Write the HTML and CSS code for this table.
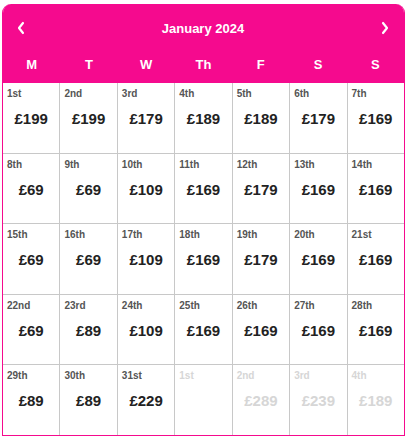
FILE: index.html
```html
<!DOCTYPE html>
<html>
<head>
<meta charset="utf-8">
<link rel="stylesheet" href="styles.css">
</head>
<body>
<div class="cal">
  <div class="head">
    <div class="title-row">
      <span class="nav"><svg width="10" height="14" viewBox="0 0 10 14"><path d="M7 2 L3 7 L7 12" fill="none" stroke="#fff" stroke-width="2.2" stroke-linecap="round" stroke-linejoin="round"/></svg></span>
      <span class="title">January 2024</span>
      <span class="nav"><svg width="10" height="14" viewBox="0 0 10 14"><path d="M3 2 L7 7 L3 12" fill="none" stroke="#fff" stroke-width="2.2" stroke-linecap="round" stroke-linejoin="round"/></svg></span>
    </div>
    <div class="days">
      <span>M</span><span>T</span><span>W</span><span>Th</span><span>F</span><span>S</span><span>S</span>
    </div>
  </div>
  <div class="grid">
    <div class="cell"><span class="d">1st</span><span class="p">£199</span></div>
    <div class="cell"><span class="d">2nd</span><span class="p">£199</span></div>
    <div class="cell"><span class="d">3rd</span><span class="p">£179</span></div>
    <div class="cell"><span class="d">4th</span><span class="p">£189</span></div>
    <div class="cell"><span class="d">5th</span><span class="p">£189</span></div>
    <div class="cell"><span class="d">6th</span><span class="p">£179</span></div>
    <div class="cell"><span class="d">7th</span><span class="p">£169</span></div>

    <div class="cell"><span class="d">8th</span><span class="p">£69</span></div>
    <div class="cell"><span class="d">9th</span><span class="p">£69</span></div>
    <div class="cell"><span class="d">10th</span><span class="p">£109</span></div>
    <div class="cell"><span class="d">11th</span><span class="p">£169</span></div>
    <div class="cell"><span class="d">12th</span><span class="p">£179</span></div>
    <div class="cell"><span class="d">13th</span><span class="p">£169</span></div>
    <div class="cell"><span class="d">14th</span><span class="p">£169</span></div>

    <div class="cell"><span class="d">15th</span><span class="p">£69</span></div>
    <div class="cell"><span class="d">16th</span><span class="p">£69</span></div>
    <div class="cell"><span class="d">17th</span><span class="p">£109</span></div>
    <div class="cell"><span class="d">18th</span><span class="p">£169</span></div>
    <div class="cell"><span class="d">19th</span><span class="p">£179</span></div>
    <div class="cell"><span class="d">20th</span><span class="p">£169</span></div>
    <div class="cell"><span class="d">21st</span><span class="p">£169</span></div>

    <div class="cell"><span class="d">22nd</span><span class="p">£69</span></div>
    <div class="cell"><span class="d">23rd</span><span class="p">£89</span></div>
    <div class="cell"><span class="d">24th</span><span class="p">£109</span></div>
    <div class="cell"><span class="d">25th</span><span class="p">£169</span></div>
    <div class="cell"><span class="d">26th</span><span class="p">£169</span></div>
    <div class="cell"><span class="d">27th</span><span class="p">£169</span></div>
    <div class="cell"><span class="d">28th</span><span class="p">£169</span></div>

    <div class="cell"><span class="d">29th</span><span class="p">£89</span></div>
    <div class="cell"><span class="d">30th</span><span class="p">£89</span></div>
    <div class="cell"><span class="d">31st</span><span class="p">£229</span></div>
    <div class="cell off"><span class="d">1st</span></div>
    <div class="cell off"><span class="d">2nd</span><span class="p">£289</span></div>
    <div class="cell off"><span class="d">3rd</span><span class="p">£239</span></div>
    <div class="cell off"><span class="d">4th</span><span class="p">£189</span></div>
  </div>
</div>
</body>
</html>
```

FILE: styles.css
```css
* { box-sizing: border-box; }
body {
  margin: 0;
  padding: 4px 0 0 2px;
  font-family: "Liberation Sans", Arial, sans-serif;
  background: #fff;
}
.cal {
  width: 403px;
  border: 1px solid #f50a8e;
  border-top: none;
  border-radius: 9px 9px 0 0;
  overflow: hidden;
}
.head {
  background: #f50a8e;
  color: #fff;
  height: 79px;
}
.title-row {
  height: 45px;
  display: flex;
  align-items: center;
  justify-content: space-between;
  padding: 3px 14px 0 13px;
}
.nav { display: flex; width: 10px; }
.title {
  font-size: 13px;
  font-weight: bold;
}
.days {
  display: grid;
  grid-template-columns: repeat(7, 1fr);
  height: 34px;
  padding-bottom: 4px;
  align-items: center;
  font-size: 13px;
  font-weight: bold;
  text-align: center;
}
.grid {
  display: grid;
  grid-template-columns: repeat(7, 1fr);
  grid-template-rows: repeat(5, 1fr);
  gap: 1px;
  background: #c8c8c8;
  height: 352px;
}
.cell {
  background: #fff;
  display: flex;
  flex-direction: column;
  padding: 5px 4px;
}
.d {
  font-size: 10px;
  font-weight: bold;
  color: #555;
}
.p {
  margin-top: 11px;
  text-align: center;
  font-size: 15px;
  font-weight: bold;
  color: #222;
}
.off .d, .off .p { color: #d6d6d6; }
```
